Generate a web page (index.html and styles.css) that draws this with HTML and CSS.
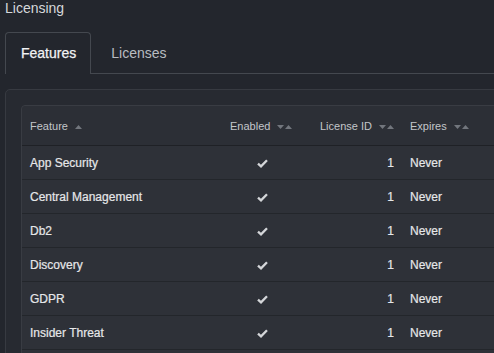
FILE: index.html
```html
<!DOCTYPE html>
<html lang="en">
<head>
    <meta charset="UTF-8">
    <title>Licensing</title>
    <link rel="stylesheet" href="styles.css">
</head>
<body>
    <div class="page">
        <h1 class="title">Licensing</h1>
        <div class="tabs">
            <div class="tab active">Features</div>
            <div class="tab">Licenses</div>
        </div>
        <div class="panel">
            <table class="grid">
                <thead>
                    <tr>
                        <th class="col-feature">Feature <svg class="sort" width="7" height="4" viewBox="0 0 7 4"><path d="M0 4 L3.5 0 L7 4 Z"/></svg></th>
                        <th class="col-enabled">Enabled <svg class="sort" width="15" height="4" viewBox="0 0 15 4"><path d="M0 0 L7 0 L3.5 4 Z M8 4 L11.5 0 L15 4 Z"/></svg></th>
                        <th class="col-id">License ID <svg class="sort" width="15" height="4" viewBox="0 0 15 4"><path d="M0 0 L7 0 L3.5 4 Z M8 4 L11.5 0 L15 4 Z"/></svg></th>
                        <th class="col-expires">Expires <svg class="sort" width="15" height="4" viewBox="0 0 15 4"><path d="M0 0 L7 0 L3.5 4 Z M8 4 L11.5 0 L15 4 Z"/></svg></th>
                    </tr>
                </thead>
                <tbody>
                    <tr><td>App Security</td><td class="check"><svg width="11" height="9" viewBox="0 0 11 9"><path d="M1 4.6 L4 7.4 L10 1.2"/></svg></td><td class="num">1</td><td>Never</td></tr>
                    <tr><td>Central Management</td><td class="check"><svg width="11" height="9" viewBox="0 0 11 9"><path d="M1 4.6 L4 7.4 L10 1.2"/></svg></td><td class="num">1</td><td>Never</td></tr>
                    <tr><td>Db2</td><td class="check"><svg width="11" height="9" viewBox="0 0 11 9"><path d="M1 4.6 L4 7.4 L10 1.2"/></svg></td><td class="num">1</td><td>Never</td></tr>
                    <tr><td>Discovery</td><td class="check"><svg width="11" height="9" viewBox="0 0 11 9"><path d="M1 4.6 L4 7.4 L10 1.2"/></svg></td><td class="num">1</td><td>Never</td></tr>
                    <tr><td>GDPR</td><td class="check"><svg width="11" height="9" viewBox="0 0 11 9"><path d="M1 4.6 L4 7.4 L10 1.2"/></svg></td><td class="num">1</td><td>Never</td></tr>
                    <tr><td>Insider Threat</td><td class="check"><svg width="11" height="9" viewBox="0 0 11 9"><path d="M1 4.6 L4 7.4 L10 1.2"/></svg></td><td class="num">1</td><td>Never</td></tr>
                    <tr class="spacer"><td></td><td></td><td></td><td></td></tr>
                </tbody>
            </table>
        </div>
    </div>
</body>
</html>
```

FILE: styles.css
```css
html { box-sizing: border-box; }
*, *::before, *::after { box-sizing: inherit; }
body {
    margin: 0;
    background: #23262d;
    overflow: hidden;
    font-family: 'Liberation Sans', Arial, Helvetica, sans-serif;
}
.page {
    width: 600px;
    padding: 0 0 0 5px;
}
.title {
    margin: 0;
    font-size: 14px;
    line-height: 16px;
    font-weight: normal;
    color: #d6d8db;
}
.tabs {
    display: flex;
    margin-top: 16px;
    border-bottom: 1px solid #44484f;
}
.tab {
    padding: 1px 19px 0 19px;
    height: 41px;
    line-height: 38px;
    font-size: 14px;
    color: #b9bcc1;
    margin-bottom: -1px;
    border: 1px solid transparent;
    border-bottom: none;
    border-radius: 4px 4px 0 0;
}
.tab.active {
    padding: 1px 14px 0 15px;
    color: #f2f3f4;
    background: #23262d;
    border-color: #44484f;
    height: 42px;
    -webkit-text-stroke: 0.25px #f2f3f4;
}
.panel {
    margin-top: 15px;
    background: #272a31;
    border: 1px solid #373a41;
    border-radius: 5px;
    padding: 15px;
}
.grid {
    width: 100%;
    border-collapse: separate;
    border-spacing: 0;
    background: #2e3138;
    border: 1px solid #393c43;
    border-radius: 4px;
    font-size: 12px;
}
.grid th {
    height: 40px;
    text-align: left;
    font-weight: normal;
    font-size: 11px;
    color: #c3c6ca;
    padding: 0 8px;
    background: #2c2f36;
    border-bottom: 1px solid #1f2126;
    white-space: nowrap;
}
.grid th:first-child { border-top-left-radius: 4px; }
.grid td {
    height: 34px;
    padding: 0 8px;
    color: #e6e7e9;
    -webkit-text-stroke: 0.2px #e6e7e9;
    border-bottom: 1px solid #23262b;
    white-space: nowrap;
}
.grid .spacer td { border-bottom: none; }
.col-feature { width: 200px; }
.col-enabled { width: 80px; }
.col-id { width: 100px; }
.grid th.col-id { text-align: right; padding-right: 8px; }
.grid td.num { text-align: right; padding-right: 8px; }
.grid td.check { text-align: center; padding: 0; }
.sort {
    fill: #72767d;
    margin-left: 4px;
    vertical-align: 1px;
}
.check svg {
    fill: none;
    stroke: #d4d6d9;
    stroke-width: 2.3;
    vertical-align: middle;
}
```
